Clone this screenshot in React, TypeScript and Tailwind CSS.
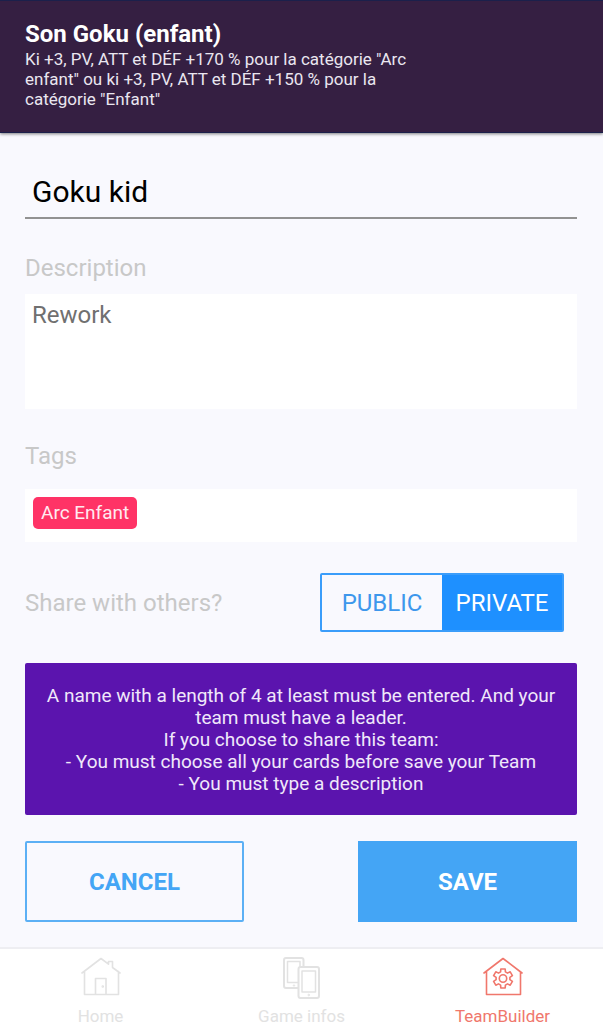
import { useState } from "react";

function HomeIcon() {
  return (
    <svg viewBox="0 0 40 40" className="h-10 w-10" fill="none" stroke="currentColor" strokeWidth="1.6" strokeLinejoin="round" strokeLinecap="round" aria-hidden="true">
      <path d="M1 16 20 1.500 27.500 7.200V4.500h4v6L39 16M3.500 14.500V37.500h34V14.500M14.500 37.500V21.500h10.500v16" />
      <circle cx="21.800" cy="29.500" r="0.500" />
    </svg>
  );
}

function DevicesIcon() {
  return (
    <svg viewBox="0 0 40 44" className="h-11 w-10" fill="none" stroke="currentColor" strokeLinejoin="round" aria-hidden="true">
      <path strokeWidth="2" d="M16.500 31H4a2 2 0 0 1-2-2V3a2 2 0 0 1 2-2H19.500a2 2 0 0 1 2 2v7" />
      <path strokeWidth="1.500" d="M16.500 25.500H5.500V4.500h12.500V10" />
      <rect strokeWidth="2" x="16.500" y="10" width="20.500" height="31" rx="2" />
      <rect strokeWidth="1.500" x="20" y="14" width="13.500" height="21" />
      <circle cx="12" cy="28.500" r="0.700" />
      <circle cx="26.800" cy="38" r="0.800" />
    </svg>
  );
}

function TeamBuilderIcon() {
  return (
    <svg viewBox="0 0 40 40" className="h-10 w-10" fill="none" stroke="currentColor" strokeWidth="1.6" strokeLinejoin="round" strokeLinecap="round" aria-hidden="true">
      <path d="M1 16 20 1.500 39 16M3.500 14.500V37.500h34V14.500" />
      <circle cx="20" cy="21.500" r="3.700" />
      <path d="M17.600 14.900 17.800 11.950H22.200L22.400 14.900 24.500 16.100 27.200 14.800 29.400 18.600 26.900 20.300V22.700L29.400 24.400 27.200 28.200 24.500 26.900 22.400 28.100 22.200 31.050H17.800L17.600 28.100 15.500 26.900 12.800 28.200 10.600 24.400 13.100 22.700V20.300L10.600 18.600 12.800 14.800 15.500 16.100Z" />
    </svg>
  );
}

const tabs = [
  { label: "Home", Icon: HomeIcon, active: false },
  { label: "Game infos", Icon: DevicesIcon, active: false },
  { label: "TeamBuilder", Icon: TeamBuilderIcon, active: true },
];

export default function App() {
  const [visibility, setVisibility] = useState("private");
  const segment = (value: string) =>
    visibility === value ? "bg-[#1e90ff] text-white" : "text-[#3d97ec]";

  return (
    <div className="flex min-h-screen flex-col bg-[#f9f9fe] font-['Roboto',sans-serif]">
      <header className="border-y border-[#1b204b] bg-[#351f42] px-[25px] pt-[18px] pb-[23px] text-white shadow-[0_1px_3px_rgba(0,0,0,0.5)]">
        <h1 className="text-[24px] leading-[30px] font-bold">Son Goku (enfant)</h1>
        <p className="max-w-[400px] text-[17px] leading-5 text-[#eae6f0]">
          Ki +3, PV, ATT et DÉF +170 % pour la catégorie "Arc enfant" ou ki +3, PV, ATT et DÉF +150 % pour la catégorie "Enfant"
        </p>
      </header>

      <main className="grow pr-[26px] pb-[25px] pl-[25px]">
        <input
          aria-label="Team name"
          defaultValue="Goku kid"
          className="mt-8 block h-[54px] w-full border-b-2 border-[#929292] bg-transparent px-[7px] text-[30px] text-black outline-none"
        />

        <label htmlFor="description" className="mt-[33px] block text-[24px] leading-8 text-[#c8c8c8]">
          Description
        </label>
        <textarea
          id="description"
          defaultValue="Rework"
          className="mt-[10px] block h-[115px] w-full resize-none bg-white px-[7px] py-[5px] text-[24px] leading-8 text-[#707070] outline-none"
        />

        <h2 className="mt-[31px] text-[24px] leading-8 text-[#c8c8c8]">Tags</h2>
        <div className="mt-[17px] flex h-[53px] items-start bg-white p-2">
          <span className="rounded-[5px] bg-[#ff3366] px-2 text-[19px] leading-8 text-[#ffeaf0]">Arc Enfant</span>
        </div>

        <div className="mt-[31px] flex items-center justify-between pr-[13px]">
          <span id="share" className="text-[24px] leading-8 text-[#c8c8c8]">Share with others?</span>
          <div role="group" aria-labelledby="share" className="grid h-[59px] w-[244px] grid-cols-2 overflow-hidden rounded-[2px] border-2 border-[#3b9dfa] text-[24px]">
            <button type="button" aria-pressed={visibility === "public"} onClick={() => setVisibility("public")} className={segment("public")}>
              PUBLIC
            </button>
            <button type="button" aria-pressed={visibility === "private"} onClick={() => setVisibility("private")} className={segment("private")}>
              PRIVATE
            </button>
          </div>
        </div>

        <div className="mt-[31px] rounded-[2px] bg-[#5b14ae] px-5 pt-[22px] pb-5 text-center text-[19px] leading-[22px] text-[#f0e8fa]">
          <p>A name with a length of 4 at least must be entered. And your team must have a leader.</p>
          <p>If you choose to share this team:</p>
          <p>- You must choose all your cards before save your Team</p>
          <p>- You must type a description</p>
        </div>

        <div className="mt-[26px] flex justify-between text-[24px] font-bold">
          <button type="button" className="h-[81px] w-[219px] rounded-[2px] border-2 border-[#5cb0f5] text-[#44a5f5]">CANCEL</button>
          <button type="button" className="h-[81px] w-[219px] bg-[#44a5f5] text-white">SAVE</button>
        </div>
      </main>

      <nav className="grid grid-cols-3 border-t-2 border-[#eeeef2] bg-white pb-[5px] text-[17px] leading-5">
        {tabs.map(({ label, Icon, active }) => (
          <a
            key={label}
            href="#"
            aria-current={active ? "page" : undefined}
            className={active ? "flex flex-col items-center pt-2 text-[#f0776c]" : "flex flex-col items-center pt-2 text-[#e2e2e2]"}
          >
            <span className="flex h-[49px] items-start">
              <Icon />
            </span>
            <span>{label}</span>
          </a>
        ))}
      </nav>
    </div>
  );
}
